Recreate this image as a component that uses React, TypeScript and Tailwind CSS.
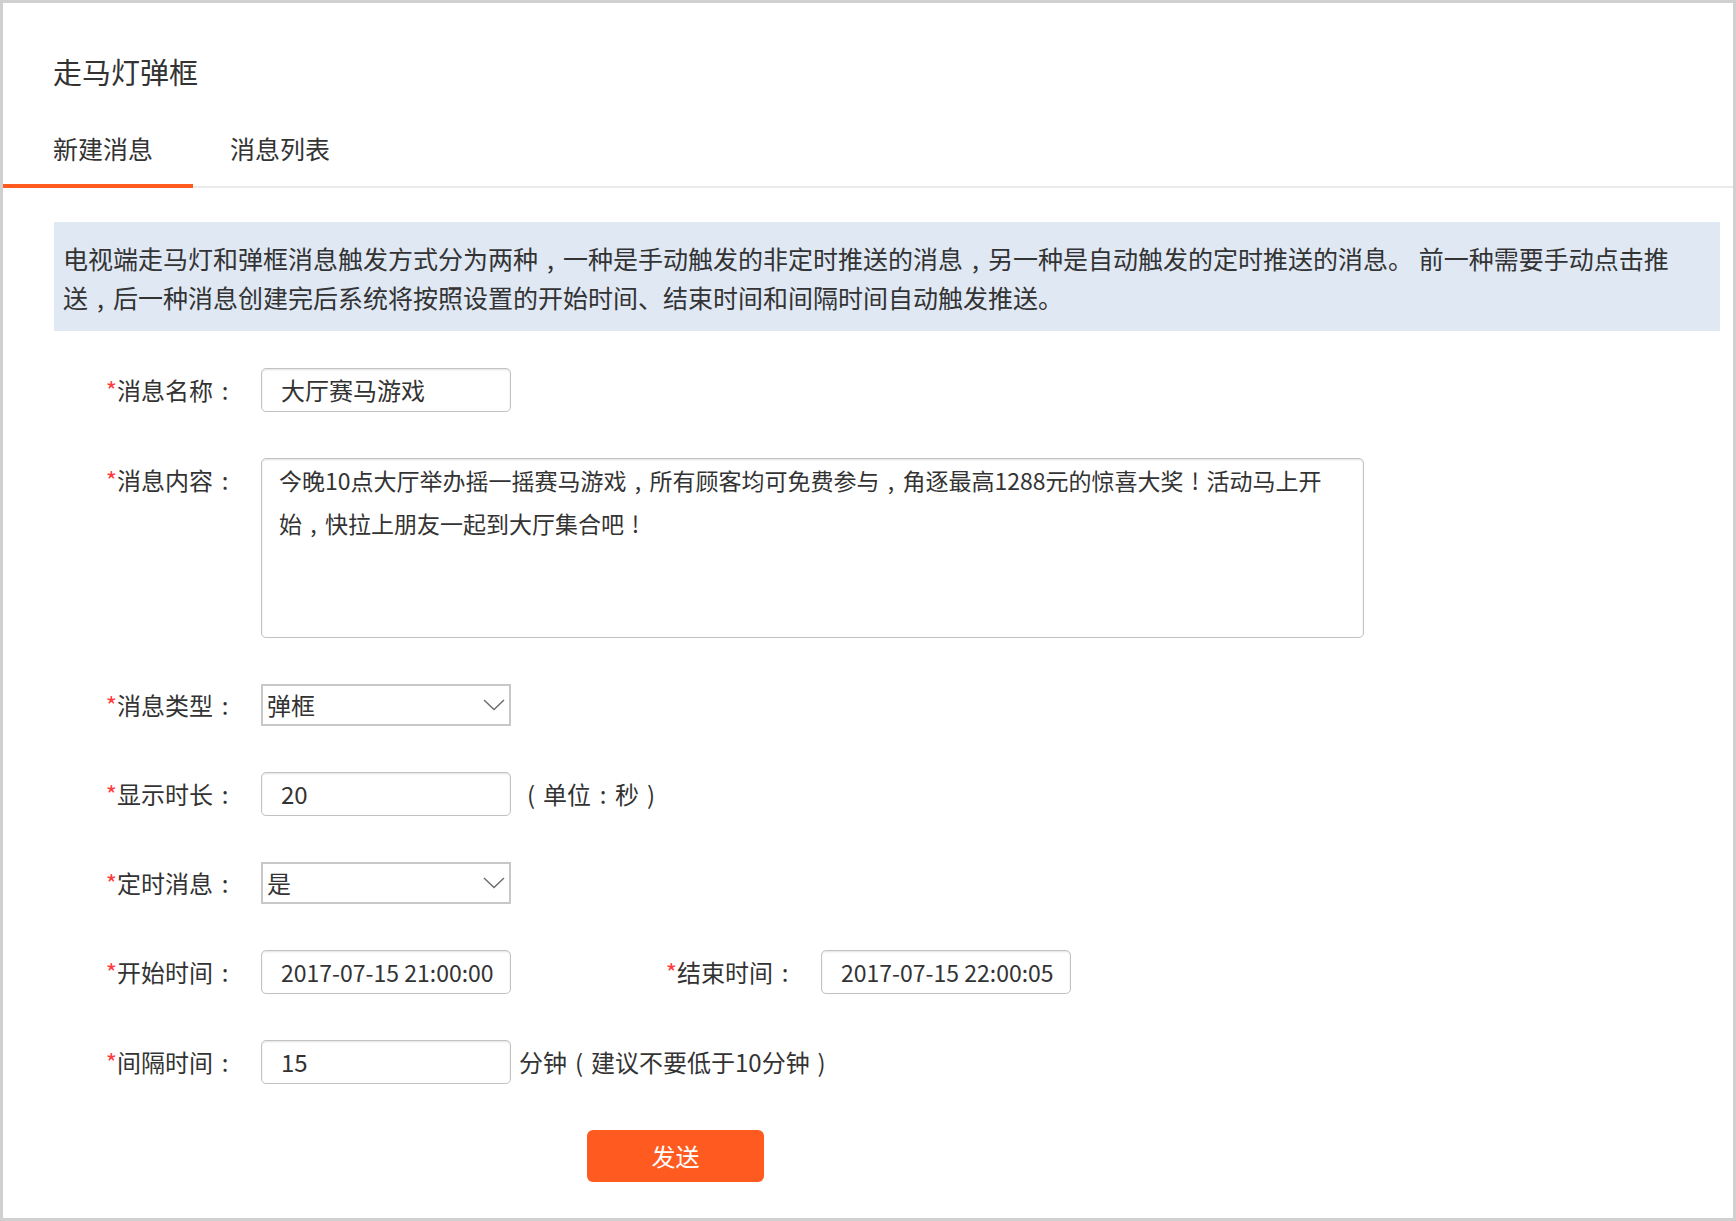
// 参考图里的全角标点是居中的半角字形，占一个字宽
const CENTERED: Record<string, string> = { '，': ',', '：': ':', '！': '!', '（': '(', '）': ')' }

function T({ s }: { s: string }) {
  const parts: React.ReactNode[] = []
  let buf = ''
  s.split('').forEach((ch, i) => {
    if (CENTERED[ch]) {
      if (buf) parts.push(buf)
      buf = ''
      parts.push(
        <span key={i} className="inline-block w-[1em] text-center">
          {CENTERED[ch]}
        </span>
      )
    } else {
      buf += ch
    }
  })
  if (buf) parts.push(buf)
  return <>{parts}</>
}

function Label({ text, width = 'w-[183px]' }: { text: string; width?: string }) {
  return (
    <div className={`${width} shrink-0 text-right leading-[44px] text-[#333]`}>
      <span className="text-[#ff3b3b]">*</span>
      <T s={text + '：'} />
    </div>
  )
}

function TextBox({ value, className = '' }: { value: string; className?: string }) {
  return (
    <div
      className={`w-[250px] h-[44px] rounded-[5px] border border-[#c2c2c2] bg-white pl-[19px] leading-[42px] text-[#333] shadow-[inset_0_1px_2px_rgba(0,0,0,0.12)] ${className}`}
    >
      {value}
    </div>
  )
}

function Chevron() {
  return (
    <svg width="22" height="12" viewBox="0 0 22 12" fill="none">
      <polyline points="1,1 11,10.5 21,1" stroke="#6b6b6b" strokeWidth="1.4" />
    </svg>
  )
}

function SelectBox({ value }: { value: string }) {
  return (
    <div className="w-[250px] h-[42px] flex items-center justify-between border-2 border-[#c8c8c8] bg-white pl-[4px] pr-[4px] text-[#333]">
      <span className="leading-[38px]">{value}</span>
      <Chevron />
    </div>
  )
}

export default function App() {
  return (
    <div className="w-[1736px] h-[1221px] border-[3px] border-[#d0d0d0] bg-white text-[24px] text-[#333] font-['Noto_Sans_CJK_SC','Noto_Sans',sans-serif]">
      {/* 标题 */}
      <div className="pt-[48px] pl-[50px] text-[29px] leading-[40px]">走马灯弹框</div>

      {/* 标签页 */}
      <div className="mt-[37px] flex border-b-2 border-[#ebebeb] text-[25px]">
        <div className="w-[190px] pl-[50px] pb-[16px] leading-[40px] border-b-4 border-[#ff5a1f] -mb-[2px]">
          新建消息
        </div>
        <div className="pl-[37px] pb-[16px] leading-[40px]">消息列表</div>
      </div>

      {/* 说明 */}
      <div className="mt-[34px] ml-[51px] mr-[13px] bg-[#dfe8f3] pl-[9px] pt-[17px] pb-[14px] text-[25px] leading-[39px] whitespace-nowrap">
        <T s="电视端走马灯和弹框消息触发方式分为两种，一种是手动触发的非定时推送的消息，另一种是自动触发的定时推送的消息。 前一种需要手动点击推" />
        <br />
        <T s="送，后一种消息创建完后系统将按照设置的开始时间、结束时间和间隔时间自动触发推送。" />
      </div>

      {/* 表单 */}
      <div className="mt-[37px] ml-[51px] flex flex-col gap-[46px]">
        <div className="flex items-center">
          <Label text="消息名称" />
          <div className="ml-[24px]">
            <TextBox value="大厅赛马游戏" />
          </div>
        </div>

        <div className="flex items-start">
          <Label text="消息内容" />
          <div className="ml-[24px] w-[1103px] h-[180px] rounded-[5px] border border-[#c2c2c2] bg-white pl-[17px] text-[23px] leading-[43px] whitespace-nowrap shadow-[inset_0_1px_2px_rgba(0,0,0,0.12)]">
            <T s="今晚10点大厅举办摇一摇赛马游戏，所有顾客均可免费参与，角逐最高1288元的惊喜大奖！活动马上开" />
            <br />
            <T s="始，快拉上朋友一起到大厅集合吧！" />
          </div>
        </div>

        <div className="flex items-center h-[42px]">
          <Label text="消息类型" />
          <div className="ml-[24px]">
            <SelectBox value="弹框" />
          </div>
        </div>

        <div className="flex items-center">
          <Label text="显示时长" />
          <div className="ml-[24px]">
            <TextBox value="20" />
          </div>
          <span className="ml-[8px] leading-[44px]">
            <T s="（单位：秒）" />
          </span>
        </div>

        <div className="flex items-center h-[42px]">
          <Label text="定时消息" />
          <div className="ml-[24px]">
            <SelectBox value="是" />
          </div>
        </div>

        <div className="flex items-center">
          <Label text="开始时间" />
          <div className="ml-[24px]">
            <TextBox value="2017-07-15 21:00:00" className="text-[23px]" />
          </div>
          <Label text="结束时间" width="w-[286px]" />
          <div className="ml-[24px]">
            <TextBox value="2017-07-15 22:00:05" className="text-[23px]" />
          </div>
        </div>

        <div className="flex items-center">
          <Label text="间隔时间" />
          <div className="ml-[24px]">
            <TextBox value="15" />
          </div>
          <span className="ml-[8px] leading-[44px]">
            <T s="分钟（建议不要低于10分钟）" />
          </span>
        </div>

        <div className="flex">
          <button className="ml-[533px] w-[177px] h-[52px] rounded-[6px] bg-[#ff5a1f] text-white text-[24px]">
            发送
          </button>
        </div>
      </div>
    </div>
  )
}
